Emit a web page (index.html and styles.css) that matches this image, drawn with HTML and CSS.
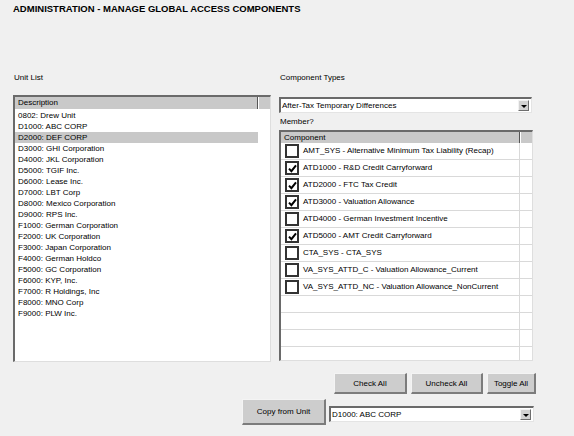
FILE: index.html
```html
<!DOCTYPE html>
<html>
<head>
<meta charset="utf-8">
<link rel="stylesheet" href="styles.css">
</head>
<body>
<div class="page">
  <h1 class="title">ADMINISTRATION - MANAGE GLOBAL ACCESS COMPONENTS</h1>
  <div class="panels">
    <div class="left">
      <div class="label">Unit List</div>
      <div class="listbox">
        <div class="lb-head"><div class="lb-col">Description</div><div class="lb-rest"></div></div>
        <div class="lb-row">0802: Drew Unit</div>
        <div class="lb-row">D1000: ABC CORP</div>
        <div class="lb-row sel">D2000: DEF CORP</div>
        <div class="lb-row">D3000: GHI Corporation</div>
        <div class="lb-row">D4000: JKL Corporation</div>
        <div class="lb-row">D5000: TGIF Inc.</div>
        <div class="lb-row">D6000: Lease Inc.</div>
        <div class="lb-row">D7000: LBT Corp</div>
        <div class="lb-row">D8000: Mexico Corporation</div>
        <div class="lb-row">D9000: RPS Inc.</div>
        <div class="lb-row">F1000: German Corporation</div>
        <div class="lb-row">F2000: UK Corporation</div>
        <div class="lb-row">F3000: Japan Corporation</div>
        <div class="lb-row">F4000: German Holdco</div>
        <div class="lb-row">F5000: GC Corporation</div>
        <div class="lb-row">F6000: KYP, Inc.</div>
        <div class="lb-row">F7000: R Holdings, Inc</div>
        <div class="lb-row">F8000: MNO Corp</div>
        <div class="lb-row">F9000: PLW Inc.</div>
      </div>
    </div>
    <div class="right">
      <div class="label">Component Types</div>
      <div class="select type-select">
        <div class="select-text">After-Tax Temporary Differences</div>
        <div class="select-btn"><span class="arrow"></span></div>
      </div>
      <div class="label member">Member?</div>
      <div class="grid">
        <div class="g-head"><div class="g-col">Component</div><div class="g-rest"></div></div>
        <div class="g-row"><div class="g-cell"><span class="cb"></span><span class="g-text">AMT_SYS - Alternative Minimum Tax Liability (Recap)</span></div><div class="g-side"></div></div>
        <div class="g-row"><div class="g-cell"><span class="cb"><svg class="tick" viewBox="0 0 9 9" width="9" height="9"><path d="M1 4.6 L3.4 7.2 L8 1.4" fill="none" stroke="#000" stroke-width="2"/></svg></span><span class="g-text">ATD1000 - R&amp;D Credit Carryforward</span></div><div class="g-side"></div></div>
        <div class="g-row"><div class="g-cell"><span class="cb"><svg class="tick" viewBox="0 0 9 9" width="9" height="9"><path d="M1 4.6 L3.4 7.2 L8 1.4" fill="none" stroke="#000" stroke-width="2"/></svg></span><span class="g-text">ATD2000 - FTC Tax Credit</span></div><div class="g-side"></div></div>
        <div class="g-row"><div class="g-cell"><span class="cb"><svg class="tick" viewBox="0 0 9 9" width="9" height="9"><path d="M1 4.6 L3.4 7.2 L8 1.4" fill="none" stroke="#000" stroke-width="2"/></svg></span><span class="g-text">ATD3000 - Valuation Allowance</span></div><div class="g-side"></div></div>
        <div class="g-row"><div class="g-cell"><span class="cb"></span><span class="g-text">ATD4000 - German Investment Incentive</span></div><div class="g-side"></div></div>
        <div class="g-row"><div class="g-cell"><span class="cb"><svg class="tick" viewBox="0 0 9 9" width="9" height="9"><path d="M1 4.6 L3.4 7.2 L8 1.4" fill="none" stroke="#000" stroke-width="2"/></svg></span><span class="g-text">ATD5000 - AMT Credit Carryforward</span></div><div class="g-side"></div></div>
        <div class="g-row"><div class="g-cell"><span class="cb"></span><span class="g-text">CTA_SYS - CTA_SYS</span></div><div class="g-side"></div></div>
        <div class="g-row"><div class="g-cell"><span class="cb"></span><span class="g-text">VA_SYS_ATTD_C - Valuation Allowance_Current</span></div><div class="g-side"></div></div>
        <div class="g-row"><div class="g-cell"><span class="cb"></span><span class="g-text">VA_SYS_ATTD_NC - Valuation Allowance_NonCurrent</span></div><div class="g-side"></div></div>
        <div class="g-row"><div class="g-cell"></div><div class="g-side"></div></div>
        <div class="g-row"><div class="g-cell"></div><div class="g-side"></div></div>
        <div class="g-row"><div class="g-cell"></div><div class="g-side"></div></div>
        <div class="g-row"><div class="g-cell"></div><div class="g-side"></div></div>
      </div>
    </div>
  </div>
  <div class="actions">
    <button class="btn btn-check">Check All</button>
    <button class="btn btn-uncheck">Uncheck All</button>
    <button class="btn btn-toggle">Toggle All</button>
  </div>
  <div class="copy-row">
    <button class="btn btn-copy">Copy from Unit</button>
    <div class="select unit-select">
      <div class="select-text">D1000: ABC CORP</div>
      <div class="select-btn"><span class="arrow"></span></div>
    </div>
  </div>
</div>
</body>
</html>
```

FILE: styles.css
```css
html, body {
  margin: 0;
  padding: 0;
  background: #f0f0f0;
}
body {
  font-family: "Liberation Sans", Arial, sans-serif;
  font-size: 8px;
  color: #000;
}
.page {
  width: 574px;
  height: 436px;
  overflow: hidden;
}
.title {
  margin: 0;
  padding: 3px 0 0 13px;
  height: 72px;
  box-sizing: border-box;
  font-size: 9.5px;
  font-weight: bold;
  line-height: 11px;
}
.panels {
  display: flex;
  align-items: flex-start;
  gap: 8px;
  padding-left: 13px;
}
.left { width: 258px; }
.right { width: 254px; }
.label {
  height: 11px;
  line-height: 11px;
  padding-left: 1px;
}
.listbox {
  margin-top: 12px;
  height: 267px;
  box-sizing: border-box;
  background: #fff;
  border-top: 2px solid #6a6a6a;
  border-left: 2px solid #6a6a6a;
  border-right: 1px solid #dedede;
  border-bottom: 1px solid #dedede;
  overflow: hidden;
}
.lb-head {
  display: flex;
  height: 13px;
  box-sizing: border-box;
  background: #c9c9c9;
  border-bottom: 1px solid #fff;
}
.lb-col {
  width: 243px;
  box-sizing: border-box;
  padding-left: 3px;
  line-height: 12px;
  border-right: 1px solid #555;
}
.lb-rest {
  flex: 1;
  border-left: 1px solid #fff;
}
.lb-row {
  width: 243px;
  box-sizing: border-box;
  height: 11px;
  line-height: 11px;
  padding-left: 3px;
  white-space: nowrap;
}
.lb-row.sel { background: #c8c8c8; }

.select {
  display: flex;
  align-items: center;
  height: 16px;
  box-sizing: border-box;
  background: #fff;
  border-top: 2px solid #6a6a6a;
  border-left: 2px solid #6a6a6a;
  border-right: 1px solid #e4e4e4;
  border-bottom: 1px solid #e4e4e4;
}
.type-select {
  margin-top: 14px;
  width: 253px;
}
.select-text {
  flex: 1;
  padding-left: 1px;
  line-height: 13px;
  white-space: nowrap;
}
.select-btn {
  width: 11px;
  height: 11px;
  margin-right: 2px;
  box-sizing: border-box;
  background: #d2d2d2;
  border-top: 1px solid #f2f2f2;
  border-left: 1px solid #f2f2f2;
  border-right: 1px solid #6e6e6e;
  border-bottom: 1px solid #6e6e6e;
  display: flex;
  align-items: center;
  justify-content: center;
}
.arrow {
  width: 0;
  height: 0;
  border-left: 3px solid transparent;
  border-right: 3px solid transparent;
  border-top: 3px solid #000;
  margin-top: 1px;
}
.member { margin-top: 3px; }

.grid {
  margin-top: 3px;
  height: 231px;
  box-sizing: border-box;
  background: #fff;
  border-top: 2px solid #6a6a6a;
  border-left: 2px solid #6a6a6a;
  border-right: 1px solid #dedede;
  border-bottom: 1px solid #dedede;
  overflow: hidden;
}
.g-head {
  display: flex;
  height: 11px;
  background: #c9c9c9;
}
.g-col {
  width: 239px;
  box-sizing: border-box;
  padding-left: 3px;
  line-height: 11px;
  border-right: 1px solid #555;
}
.g-rest {
  flex: 1;
  border-left: 1px solid #fff;
}
.g-row {
  display: flex;
  height: 17px;
  box-sizing: border-box;
  border-bottom: 1px solid #d9d9d9;
}
.g-cell {
  width: 239px;
  box-sizing: border-box;
  display: flex;
  align-items: center;
  border-right: 1px solid #d9d9d9;
  padding-left: 4px;
  white-space: nowrap;
}
.g-side { flex: 1; }
.cb {
  width: 14px;
  height: 14px;
  box-sizing: border-box;
  border: 2px solid #333;
  background: #fff;
  display: flex;
  align-items: center;
  justify-content: center;
  flex: none;
}
.tick { display: block; }
.g-text {
  margin-left: 4px;
  line-height: 12px;
}

.actions {
  display: flex;
  justify-content: flex-end;
  gap: 4px;
  padding-right: 38px;
  margin-top: 11px;
}
.btn {
  margin: 0;
  padding: 0;
  height: 21px;
  box-sizing: border-box;
  background: #cdcdcd;
  border-style: solid;
  border-width: 1px 2px 2px 1px;
  border-color: #f4f4f4 #7c7c7c #7c7c7c #f4f4f4;
  font-family: "Liberation Sans", Arial, sans-serif;
  font-size: 8px;
  color: #000;
  text-align: center;
}
.btn-check { width: 73px; }
.btn-uncheck { width: 72px; }
.btn-toggle { width: 49px; }
.copy-row {
  display: flex;
  align-items: flex-start;
  gap: 3px;
  padding-left: 242px;
  margin-top: 5px;
}
.btn-copy {
  width: 84px;
  height: 26px;
}
.unit-select {
  width: 205px;
  margin-top: 7px;
}
```
